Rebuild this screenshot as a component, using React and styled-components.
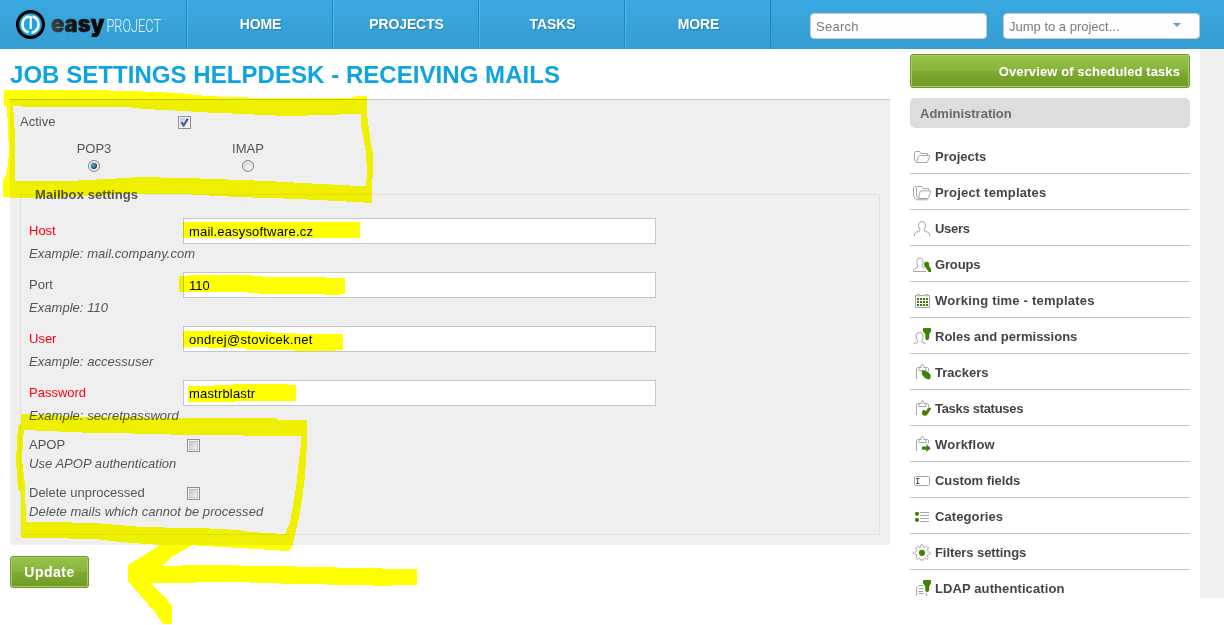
import React from "react";
import styled, { createGlobalStyle } from "styled-components";

const GlobalStyle = createGlobalStyle`
  *, *::before, *::after { box-sizing: border-box; }
  body {
    margin: 0;
    background: #fff;
    color: #555;
    font: 13px/18px "Liberation Sans", Arial, sans-serif;
    overflow: hidden;
  }
  #root { height: 625px; }
  input, button { font: inherit; letter-spacing: inherit; }
`;

const Page = styled.div`
  position: relative;
  height: 625px;
  overflow: hidden;
  background: #fff;
`;

/* ---------- top bar ---------- */

const TopBar = styled.header`
  display: flex;
  height: 49px;
  background: linear-gradient(#38a9e1, #369dd1);
`;

const Brand = styled.a`
  display: block;
  width: 186px;
  padding: 9px 0 0 15px;
  svg { display: block; overflow: visible; }
`;

const Nav = styled.nav`
  display: flex;
  border-right: 1px solid #0f8cbb;
`;

const NavLink = styled.a`
  width: 146px;
  border-left: 1px solid #0f8cbb;
  box-shadow: inset 1px 0 #4fbdec;
  padding-left: 2px;
  color: #fff;
  font-weight: bold;
  font-size: 14px;
  line-height: 49px;
  letter-spacing: -0.1px;
  text-align: center;
  text-shadow: 1px 1px 1px #2a7ba8;
`;

const QuickTools = styled.div`
  display: flex;
  gap: 16px;
  padding: 13px 0 0 39px;
`;

const SearchBox = styled.input`
  width: 177px;
  height: 26px;
  border: 1px solid #c8c8c8;
  border-radius: 4px;
  padding: 1px 5px 0;
  background: #fdfdfd;
  outline: 0;
  letter-spacing: 0.25px;
  &::placeholder { color: #7b7b7b; opacity: 1; }
`;

const JumpBox = styled.div`
  display: flex;
  align-items: center;
  justify-content: space-between;
  width: 197px;
  height: 26px;
  border: 1px solid #c8c8c8;
  border-radius: 4px;
  padding: 2px 18px 0 5px;
  background: #fdfdfd;
  color: #7b7b7b;
`;

const Caret = styled.span`
  border: 4px solid transparent;
  border-top-color: #6c9bd2;
  border-bottom: 0;
  margin-top: -4px;
`;

/* ---------- page frame ---------- */

const Columns = styled.div`
  display: flex;
  height: 576px;
`;

const Main = styled.main`
  width: 890px;
  padding: 0 0 0 10px;
`;

const Title = styled.h1`
  margin: 0;
  height: 50px;
  color: #0ea4e0;
  font-size: 24px;
  line-height: 52px;
  letter-spacing: 0.05px;
  white-space: nowrap;
`;

const Panel = styled.section`
  height: 446px;
  border-top: 1px solid #c6c6c6;
  border-radius: 0 0 4px 4px;
  padding: 13px 10px 0;
  background: #efefef;
`;

const ActiveRow = styled.div`
  display: flex;
  align-items: center;
  height: 18px;
`;

const ActiveLabel = styled.label`
  width: 158px;
`;

const ProtocolRow = styled.div`
  display: flex;
  margin: 9px 0 0 -3px;
`;

const Protocol = styled.label`
  display: flex;
  flex-direction: column;
  align-items: center;
  width: 154px;
  gap: 2px;
`;

const Mailbox = styled.fieldset`
  height: 350px;
  margin: 13px 0 0;
  border: 1px solid #e2e2e2;
  padding: 15px 8px 0;
`;

const Legend = styled.legend`
  margin: 0;
  padding: 1px 6px 0;
  font-weight: bold;
  letter-spacing: 0.08px;
  line-height: 17px;
`;

const Field = styled.div`
  height: ${(p) => (p.$compact ? 48 : 54)}px;
`;

const FieldLine = styled.div`
  display: flex;
  height: ${(p) => (p.$compact ? 18 : 26)}px;
  align-items: ${(p) => (p.$compact ? "flex-start" : "center")};
`;

const FieldLabel = styled.label`
  width: ${(p) => (p.$compact ? 158 : 154)}px;
  color: ${(p) => (p.$required ? "#ff0012" : "#555")};
`;

const TextInput = styled.input`
  width: 473px;
  height: 26px;
  border: 1px solid #c6c6c6;
  padding: 1px 5px 0;
  background: #fff;
  color: #000;
  outline: 0;
  letter-spacing: ${(p) => p.$track || 0}px;
`;

const Hint = styled.div`
  font-style: italic;
  line-height: 19px;
  letter-spacing: 0.04px;
  white-space: nowrap;
`;

const Toggles = styled.div`
  padding-top: 2px;
`;

const Box = styled.span`
  display: flex;
  width: 13px;
  height: 13px;
  margin-top: ${(p) => p.$drop || 0}px;
  border: 1px solid #8e8f8f;
  padding: 1px;
  background: #f4f4f4;
  svg, i { display: block; flex: 1; width: 9px; height: 9px; background: linear-gradient(135deg, #c2c7cc, #f7f7f7); border: 1px solid #bfc3c8; }
  svg { border: 0; overflow: visible; }
`;

const Radio = styled.span`
  display: flex;
  align-items: center;
  justify-content: center;
  width: 12px;
  height: 12px;
  border: 1px solid #858686;
  border-radius: 50%;
  background: radial-gradient(circle at 60% 60%, #f0f0f0 20%, #c4c8cb 80%);
  box-shadow: inset 0 0 0 1px #f4f4f4;
  &::after {
    content: "";
    width: 6px;
    height: 6px;
    border-radius: 50%;
    background: ${(p) => (p.$on ? "radial-gradient(circle at 40% 40%, #5ab8e4, #0b3f63 70%)" : "transparent")};
  }
`;

const greenFace = `
  border: 1px solid #6b9a26;
  border-radius: 3px;
  background: linear-gradient(#99c34b, #88b43b 49%, #7dab2f 51%, #719a26);
  box-shadow: inset 0 0 0 1px #a8cc68;
  color: #fff;
  font-weight: bold;
`;

const UpdateButton = styled.button`
  ${greenFace}
  display: block;
  width: 79px;
  height: 32px;
  margin-top: 11px;
  padding: 0;
  font-size: 14px;
  letter-spacing: 0.5px;
`;

/* ---------- sidebar ---------- */

const Sidebar = styled.aside`
  width: 310px;
  height: 549px;
  padding: 5px 10px 0 20px;
  overflow: hidden;
`;

const Gutter = styled.div`
  width: 24px;
  height: 549px;
  background: #efefef;
`;

const OverviewButton = styled.a`
  ${greenFace}
  display: block;
  height: 34px;
  padding-right: 9px;
  line-height: 33px;
  text-align: right;
  letter-spacing: 0.1px;
`;

const SideHeading = styled.h2`
  height: 30px;
  margin: 10px 0;
  border-radius: 5px;
  padding-left: 10px;
  background: #dcdddf;
  color: #6a6a6a;
  font-size: 13px;
  line-height: 31px;
`;

const Menu = styled.ul`
  margin: 0;
  padding: 0;
  list-style: none;
`;

const MenuItem = styled.li`
  display: flex;
  align-items: center;
  gap: 4px;
  height: 36px;
  border-bottom: 1px solid #c4c4c4;
  padding: 1px 0 0 3px;
  color: #444;
  font-weight: bold;
  letter-spacing: ${(p) => p.$track || 0}px;
  &:last-child { border-bottom-color: transparent; }
`;

const MenuText = styled.span`
  padding-top: 2px;
`;

const Glyph = styled.svg`
  width: 18px;
  height: 18px;
  fill: none;
  stroke: #a6a6a6;
  stroke-width: 1;
  overflow: visible;
  .g { fill: #3d8406; stroke: none; }
`;

const Marker = styled.svg`
  position: absolute;
  inset: 0;
  fill: #ff0;
  fill-rule: evenodd;
  mix-blend-mode: multiply;
  pointer-events: none;
`;

const board = (
  <path d="M3.500 16V5.500l1-1H6M13 4.500h1.500l1 1V8M6 7.500V4.500h2.200V3.200l.8-1.500h1l.8 1.500V4.500H13V7.500z" />
);

const glyphs = {
  folder: <path d="M3.500 15.500L1.500 13V5.500l1-1h4l1.500 2h6.500v2M3.500 15.500L5.500 9l1-.5h10.200l-.2 1.500-2 5-.8.500z" />,
  folders: (
    <path d="M4 16.500h-1L.5 13V5l1-1.500H3M5.500 15.500L3.500 13V4.500l1-1h4l1.500 2h5.500v2M5.500 15.500L7 8.500l1-.7h9.700l-.2 1.500-2 5.500-1 .7zM4 16.800h10l1-1" />
  ),
  user: (
    <path d="M1.500 17v-2l1-1.500 4-1.500.5-1.500-1.300-2.500V5L7 3l2-.5L11 3l1.300 2v3L11 10.500l.5 1.500 4 1.500 1 1.500v2" />
  ),
  group: (
    <>
      <path d="M13 16.500H.5V15l1-1.500 3-1.200.5-1.300-1-2.500V5.500L5.200 3.500 7 3l1.800.5L10 5.500v3L9 11l.5 1.300 2 .8" />
      <path className="g" d="M11 8.500l1.500-1.700h2.500l1.200 1.700-.2 2 1 2 1 1V17h-2.500l-1-2-2-2.500-1-1z" />
    </>
  ),
  calendar: (
    <>
      <path d="M4 4.500H2.500v12h14v-12H15M7 4.500h5M4.500 5.500v-2h2v2M12.500 5.500v-2h2v2" />
      <path d="M4 8h11M4 11h11M4 14h11" stroke="#3d7a06" strokeWidth="2" strokeDasharray="2 1" />
    </>
  ),
  role: (
    <>
      <path d="M.5 16.800l2-.8 2-.7v-2L3.200 11V8l1.300-2L6.500 5.500 8.500 6 10 8v3l-1.200 2.300v2l2.200.7 2 .8" />
      <path className="g" d="M10.500 1h7l.5.800V4l-1.800 3.500v4L14.800 13h-1.300L12.300 12V7.500L10 4V1.800z" />
    </>
  ),
  tracker: (
    <>
      {board}
      <path className="g" d="M8.700 8l3-.3 3.500 1.300 2.500 3-.2 3.500-2 1-3.500-1.300L9 11.500z" />
    </>
  ),
  status: (
    <>
      {board}
      <path className="g" d="M9 13l1-2h1.500l1.500 1 2.500-3.500 2 .2.500 1.300-4 6-2.500 1-2.500-2z" />
    </>
  ),
  workflow: (
    <>
      {board}
      <path className="g" d="M9 11.500h4.500V9.300l4.300 3.900-4.300 3.800v-2.200H9z" />
    </>
  ),
  field: (
    <>
      <rect x="1.500" y="5.500" width="15" height="9" rx="1" />
      <path d="M3 7.500h3.400M3 12.500h3.400M4.700 7.500v5" stroke="#3d6a16" />
    </>
  ),
  list: (
    <>
      <path d="M7 5.500h9M7 8.500h9M7 11.500h9M7 14.500h9" />
      <circle className="g" cx="4" cy="6.800" r="2.100" />
      <circle className="g" cx="4" cy="12.900" r="2.100" />
    </>
  ),
  gear: (
    <>
      <path
        d="M7.500 4V2.500L9 1.500l1.500 1V4l1.500.5 1.500-1.500 1.800 1-.3 2-.8 1.500.5 1.300 2 .2.800 1-.8 1.500-2 .2-.5 1.300 1 1.500-.2 1.500-1.500.5L12 15l-1.500.7v1.300h-3v-1.300L6 15l-1.500 1.500-1.500-.5-.2-1.500 1-1.500-.5-1.300-2-.2L.5 10l.8-1 2-.2.500-1.300L3 6l-.3-2 1.800-1L6 4.500z"
        strokeDasharray="5 .8"
      />
      <circle className="g" cx="9" cy="9.800" r="3.100" />
    </>
  ),
  ldap: (
    <>
      <path d="M3.500 17V8.500l2-2H10M13.500 14v3M5.500 9.500h5M5.500 12.500h5M5.500 14.500h5" />
      <path className="g" d="M10.500 1h7l.5.800V4l-1.800 3.500v4L14.800 13h-1.300L12.300 12V7.500L10 4V1.800z" />
    </>
  ),
};

const fields = [
  { label: "Host", value: "mail.easysoftware.cz", track: 0.17, hint: "Example: mail.company.com", required: true },
  { label: "Port", value: "110", hint: "Example: 110" },
  { label: "User", value: "ondrej@stovicek.net", track: 0.3, hint: "Example: accessuser", required: true },
  { label: "Password", value: "mastrblastr", track: 0.18, hint: "Example: secretpassword", required: true },
];

const toggles = [
  { label: "APOP", hint: "Use APOP authentication" },
  { label: "Delete unprocessed", hint: "Delete mails which cannot be processed" },
];

const menu = [
  ["folder", "Projects"],
  ["folders", "Project templates", 0.18],
  ["user", "Users", -0.3],
  ["group", "Groups", -0.15],
  ["calendar", "Working time - templates", 0.22],
  ["role", "Roles and permissions"],
  ["tracker", "Trackers"],
  ["status", "Tasks statuses", -0.3],
  ["workflow", "Workflow", 0.2],
  ["field", "Custom fields", -0.05],
  ["list", "Categories", 0.1],
  ["gear", "Filters settings", -0.08],
  ["ldap", "LDAP authentication", 0.1],
];

function Logo() {
  return (
    <svg width="171" height="34" viewBox="15 9 171 34">
      <defs>
        <linearGradient id="ink" x1="0" x2="1">
          <stop offset="0" stopColor="#444" />
          <stop offset=".4" stopColor="#161616" />
          <stop offset="1" stopColor="#000" />
        </linearGradient>
      </defs>
      <circle cx="30.500" cy="24.500" r="12.900" fill="#25a3df" stroke="#000" strokeWidth="3.200" />
      <g fill="none" stroke="#fff" strokeWidth="2.600">
        <path d="M28.500 16.600a8.200 8.200 0 0 0 0 15.800M32.500 16.600a8.200 8.200 0 0 1 0 15.800" />
        <path d="M27 16.800h3.700V29M31.500 32.400h2" strokeWidth="2.200" />
      </g>
      <text x="51" y="31.500" fontFamily="Inter, sans-serif" fontWeight="900" fontSize="23" textLength="53.500" lengthAdjust="spacingAndGlyphs" fill="url(#ink)" stroke="url(#ink)" strokeWidth=".5">easy</text>
      <text x="106.500" y="32" fontFamily="Roboto, sans-serif" fontWeight="300" fontSize="17.500" textLength="54.500" lengthAdjust="spacingAndGlyphs" fill="#e6f5fd">PROJECT</text>
    </svg>
  );
}

function CheckBox({ checked, drop }) {
  return (
    <Box $drop={drop}>
      {checked ? (
        <svg viewBox="0 0 9 9">
          <path d="M1.500 4.200l2.200 3.300L7.700.8" fill="none" stroke="#41548f" strokeWidth="2" />
        </svg>
      ) : (
        <i />
      )}
    </Box>
  );
}

function MarkerStrokes() {
  return (
    <Marker width="1224" height="625" viewBox="0 0 1224 625" shapeRendering="crispEdges">
      <path d="M4 90H109V91L143 91.500 179 93 187 94 202 95.500 225 97 295 98.500 340 98 351 97.500 358 96H367V114L371 145 373 153 372 203 355 202 298 199 238 197 183 194 127 194 75 196 27 198H10V196.500H3V181.500L7 172 9 153 7 106H4ZM13 106L31 107H127L143 109 175 110.500 207 112.500 233 113.500 285 116 328 115 361 113.500V125L366 153 367 173 366 186 350 185.500 303 183 267 181 200 178.500 142 177 107 179 68 181 15 181.500V135Z" />
      <path d="M183 222H360V238H183Z" />
      <path d="M179 276H189V275H251V276H262V277H326V278H345V294H340V295H324V294H259V293H247V292H179Z" />
      <path d="M183 331H252V332H273V333H295V334H343V350H335V351H294V350H246V348H208V347H183Z" />
      <path d="M188 386H214V385H233V384H288V385H296V401H236V402H188Z" />
      <path d="M21 414L49 415 79 416.500 180 418H277V420H307V443L305 477 300 513 295 535 292 548 288 551 272 550 240 548 197 545.500 193 545 173 556 162 566 202 565 275 566 337 567.500 382 568V569H417V585L382 585.700 336 584.700 287 583.700 243 582.300 197 582V583H151L167 600 172 606V624H163L155 612 133 587 128 582V565L143 556 160 545 120 542 95 539 42 538H21V493L18 490 16 460 18 425 21 424ZM24 430L82 432.500 158 434 182 435 301 436V443L296 487 290 523 285 534 250 532 238 530 210 528.500 143 527 95 523 26 521.500 25 485 22 460 23 440Z" />
    </Marker>
  );
}

export default function App() {
  return (
    <Page>
      <GlobalStyle />
      <TopBar>
        <Brand><Logo /></Brand>
        <Nav>
          {["HOME", "PROJECTS", "TASKS", "MORE"].map((name) => (
            <NavLink key={name}>{name}</NavLink>
          ))}
        </Nav>
        <QuickTools>
          <SearchBox placeholder="Search" />
          <JumpBox>Jump to a project...<Caret /></JumpBox>
        </QuickTools>
      </TopBar>

      <Columns>
        <Main>
          <Title>JOB SETTINGS HELPDESK - RECEIVING MAILS</Title>
          <Panel>
            <ActiveRow>
              <ActiveLabel>Active</ActiveLabel>
              <CheckBox checked drop={1} />
            </ActiveRow>
            <ProtocolRow>
              <Protocol>POP3<Radio $on /></Protocol>
              <Protocol>IMAP<Radio /></Protocol>
            </ProtocolRow>
            <Mailbox>
              <Legend>Mailbox settings</Legend>
              {fields.map((f) => (
                <Field key={f.label}>
                  <FieldLine>
                    <FieldLabel $required={f.required}>{f.label}</FieldLabel>
                    <TextInput defaultValue={f.value} $track={f.track} />
                  </FieldLine>
                  <Hint>{f.hint}</Hint>
                </Field>
              ))}
              <Toggles>
                {toggles.map((t) => (
                  <Field $compact key={t.label}>
                    <FieldLine $compact>
                      <FieldLabel $compact>{t.label}</FieldLabel>
                      <CheckBox drop={3} />
                    </FieldLine>
                    <Hint>{t.hint}</Hint>
                  </Field>
                ))}
              </Toggles>
            </Mailbox>
          </Panel>
          <UpdateButton>Update</UpdateButton>
        </Main>

        <Sidebar>
          <OverviewButton>Overview of scheduled tasks</OverviewButton>
          <SideHeading>Administration</SideHeading>
          <Menu>
            {menu.map(([icon, name, track]) => (
              <MenuItem key={name} $track={track}>
                <Glyph viewBox="0 0 18 18">{glyphs[icon]}</Glyph>
                <MenuText>{name}</MenuText>
              </MenuItem>
            ))}
          </Menu>
        </Sidebar>
        <Gutter />
      </Columns>
      <MarkerStrokes />
    </Page>
  );
}
